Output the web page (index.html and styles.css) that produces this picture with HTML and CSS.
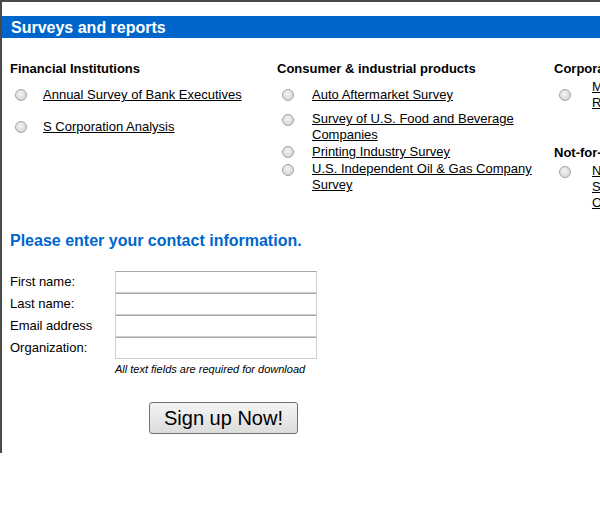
FILE: index.html
```html
<!DOCTYPE html>
<html lang="en">
<head>
  <meta charset="UTF-8" />
  <title>Surveys and reports</title>
  <link rel="stylesheet" href="styles.css">
</head>
<body>
  <div class="frame">
    <div class="bar">Surveys and reports</div>

    <div class="content">
      <div class="surveys">
        <div class="col col1">
          <h3>Financial Institutions</h3>
          <label class="item tall">
            <span class="rcell"><input type="radio" name="survey" /></span>
            <a href="#">Annual Survey of Bank Executives</a>
          </label>
          <label class="item tall">
            <span class="rcell"><input type="radio" name="survey" /></span>
            <a href="#">S Corporation Analysis</a>
          </label>
        </div>

        <div class="col col2">
          <h3>Consumer &amp; industrial products</h3>
          <label class="item tall">
            <span class="rcell"><input type="radio" name="survey" /></span>
            <a href="#">Auto Aftermarket Survey</a>
          </label>
          <label class="item">
            <span class="rcell"><input type="radio" name="survey" /></span>
            <a href="#">Survey of U.S. Food and Beverage Companies</a>
          </label>
          <label class="item">
            <span class="rcell"><input type="radio" name="survey" /></span>
            <a href="#">Printing Industry Survey</a>
          </label>
          <label class="item">
            <span class="rcell"><input type="radio" name="survey" /></span>
            <a href="#">U.S. Independent Oil &amp; Gas Company Survey</a>
          </label>
        </div>

        <div class="col col3">
          <h3>Corporate governance</h3>
          <label class="item tall">
            <span class="rcell"><input type="radio" name="survey" /></span>
            <a href="#">Middle Market<br>Report</a>
          </label>
          <h3 class="next">Not-for-profit</h3>
          <label class="item">
            <span class="rcell"><input type="radio" name="survey" /></span>
            <a href="#">Nonprofit<br>Standards<br>Outlook</a>
          </label>
        </div>
      </div>

      <h2 class="contact-title">Please enter your contact information.</h2>

      <form class="contact" onsubmit="return false">
        <label for="first">First name:</label>
        <input type="text" id="first" />
        <label for="last">Last name:</label>
        <input type="text" id="last" />
        <label for="email">Email address</label>
        <input type="text" id="email" />
        <label for="org">Organization:</label>
        <input type="text" id="org" />
        <span></span>
        <p class="note">All text fields are required for download</p>
      </form>

      <button class="signup">Sign up Now!</button>
    </div>
  </div>
</body>
</html>
```

FILE: styles.css
```css
html, body {
  margin: 0;
  overflow: hidden;
}
body {
  font-family: "Liberation Sans", Arial, sans-serif;
  font-size: 13px;
  color: #000;
  background: #fff;
}
.frame {
  box-sizing: border-box;
  height: 453px;
  border-top: 2px solid #4a4a4a;
  border-left: 2px solid #4a4a4a;
  padding-top: 14px;
  overflow: hidden;
}
.bar {
  background-color: #0066cc;
  color: #fff;
  font-weight: bold;
  font-size: 16px;
  height: 21px;
  padding-top: 1px;
  line-height: 22px;
  padding-left: 9px;
}
.content {
  padding-left: 8px;
}
.surveys {
  display: grid;
  grid-template-columns: 267px 277px 260px;
  margin-top: 23px;
}
h3 {
  margin: 0 0 2px;
  font-size: 13px;
  line-height: 16px;
}
h3.next { margin-top: 34px; }
.item {
  display: flex;
  align-items: center;
  min-height: 18px;
  line-height: 16px;
  cursor: pointer;
}
.item.tall { min-height: 32px; }
.rcell {
  flex: none;
  align-self: flex-start;
  width: 33px;
}
.tall .rcell { align-self: center; }
.col2 .rcell { width: 35px; }
.col3 .rcell { width: 38px; }
.col2 a { width: 232px; }
.item a {
  color: #000;
  text-decoration: underline;
}
input[type="radio"] {
  appearance: none;
  -webkit-appearance: none;
  display: block;
  box-sizing: border-box;
  width: 12px;
  height: 12px;
  margin: 3px 0 3px 5px;
  border: 1px solid #a4a4a4;
  border-radius: 50%;
  background: radial-gradient(circle at 45% 40%, #f4f4f4 0, #dedede 55%, #c8c8c8 100%);
}
.tall input[type="radio"] { margin: 0 0 0 5px; }
.contact-title {
  color: #0066cc;
  font-size: 16px;
  line-height: 19px;
  margin: 20px 0 0;
}
.contact {
  display: grid;
  grid-template-columns: 105px 202px;
  margin-top: 21px;
}
.contact label {
  line-height: 22px;
}
.contact input {
  box-sizing: border-box;
  height: 22px;
  margin: 0;
  border: 1px solid #d0d0d0;
  border-top-color: #a8a8a8;
  font: 13px "Liberation Sans", Arial, sans-serif;
}
.note {
  margin: 4px 0 0;
  font-size: 11px;
  font-style: italic;
  line-height: 12px;
}
.signup {
  display: block;
  width: 149px;
  height: 32px;
  margin: 27px 0 0 139px;
  padding: 0;
  border: 1px solid #707070;
  border-radius: 3px;
  background: linear-gradient(#f4f4f4, #dcdcdc);
  font-family: "Liberation Sans", Arial, sans-serif;
  font-size: 20px;
  color: #000;
  cursor: pointer;
}
```
